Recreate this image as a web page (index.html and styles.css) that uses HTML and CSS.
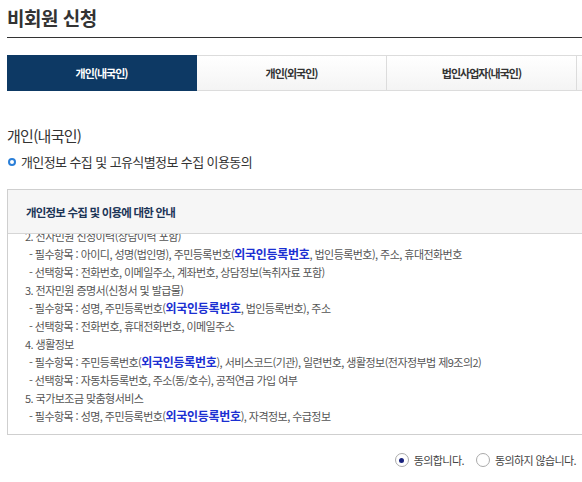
FILE: index.html
```html
<!DOCTYPE html>
<html lang="ko">
<head>
<meta charset="utf-8">
<title>비회원 신청</title>
<link rel="stylesheet" href="styles.css">
</head>
<body>
<div class="page">
  <h1 class="title">비회원 신청</h1>
  <div class="tabs">
    <div class="tab active">개인(내국인)</div>
    <div class="tab">개인(외국인)</div>
    <div class="tab">법인사업자(내국인)</div>
    <div class="tab"></div>
  </div>
  <h2 class="sub">개인(내국인)</h2>
  <h3 class="bullet"><span class="ring"></span>개인정보 수집 및 고유식별정보 수집 이용동의</h3>
  <div class="box">
    <div class="box-head">개인정보 수집 및 이용에 대한 안내</div>
    <div class="box-body">
      <ul class="lines">
        <li>2. 전자민원 신청이력(상담이력 포함)</li>
        <li class="dash">- 필수항목 : 아이디, 성명(법인명), 주민등록번호(<b>외국인등록번호</b>, 법인등록번호), 주소, 휴대전화번호</li>
        <li class="dash">- 선택항목 : 전화번호, 이메일주소, 계좌번호, 상담정보(녹취자료 포함)</li>
        <li>3. 전자민원 증명서(신청서 및 발급물)</li>
        <li class="dash">- 필수항목 : 성명, 주민등록번호(<b>외국인등록번호</b>, 법인등록번호), 주소</li>
        <li class="dash">- 선택항목 : 전화번호, 휴대전화번호, 이메일주소</li>
        <li>4. 생활정보</li>
        <li class="dash">- 필수항목 : 주민등록번호(<b>외국인등록번호</b>), 서비스코드(기관), 일련번호, 생활정보(전자정부법 제9조의2)</li>
        <li class="dash">- 선택항목 : 자동차등록번호, 주소(동/호수), 공적연금 가입 여부</li>
        <li>5. 국가보조금 맞춤형서비스</li>
        <li class="dash">- 필수항목 : 성명, 주민등록번호(<b>외국인등록번호</b>), 자격정보, 수급정보</li>
      </ul>
    </div>
  </div>
  <div class="agree">
    <label class="opt"><span class="radio on"></span>동의합니다.</label>
    <label class="opt"><span class="radio"></span>동의하지 않습니다.</label>
  </div>
</div>
</body>
</html>
```
FILE: styles.css
```css
html, body {
  margin: 0;
  padding: 0;
  background: #fff;
  overflow: hidden;
}
body {
  font-family: "Noto Sans CJK KR", "Noto Sans", sans-serif;
  color: #333;
}
.page {
  width: 575px;
  padding-left: 7px;
}
.title {
  margin: 0;
  padding-top: 4px;
  height: 33px;
  font-size: 19px;
  line-height: 28px;
  font-weight: 700;
  letter-spacing: -0.5px;
  color: #333;
  border-bottom: 1px solid #333;
}
.tabs {
  display: flex;
  margin-top: 17px;
  overflow: hidden;
}
.tab {
  flex: 0 0 189px;
  height: 34px;
  box-sizing: content-box;
  display: flex;
  align-items: center;
  justify-content: center;
  font-size: 11px;
  font-weight: 700;
  letter-spacing: -1px;
  color: #333;
  background: linear-gradient(#fff, #f4f4f4);
  border-top: 1px solid #dcdcdc;
  border-bottom: 1px solid #dcdcdc;
  border-right: 1px solid #dcdcdc;
  white-space: nowrap;
}
.tab.active {
  background: #0d3964;
  color: #fff;
  border-color: #0d3964;
}
.sub {
  margin: 35px 0 0;
  font-size: 15px;
  line-height: 20px;
  font-weight: 400;
  letter-spacing: -0.7px;
  color: #333;
}
.bullet {
  margin: 6px 0 0;
  display: flex;
  align-items: center;
  font-size: 13px;
  line-height: 20px;
  font-weight: 400;
  letter-spacing: -0.6px;
  color: #333;
}
.ring {
  width: 4px;
  height: 4px;
  border: 2px solid #2b7fd8;
  border-radius: 50%;
  margin: 0 5px 0 1px;
}
.box {
  margin-top: 17px;
  border: 1px solid #cfcfcf;
  border-right: 0;
}
.box-head {
  height: 43px;
  background: #f6f6f6;
  border-bottom: 1px solid #d6d6d6;
  display: flex;
  align-items: center;
  padding-left: 18px;
  font-size: 11.5px;
  font-weight: 700;
  letter-spacing: -0.8px;
  color: #1c3557;
}
.box-body {
  height: 200px;
  overflow: hidden;
  display: flex;
  flex-direction: column;
  justify-content: flex-end;
}
.lines {
  list-style: none;
  margin: 0;
  padding: 0 0 9px 17px;
  flex-shrink: 0;
}
.lines li {
  font-size: 11px;
  line-height: 18px;
  letter-spacing: -0.55px;
  color: #555;
  white-space: nowrap;
}
.lines li.dash {
  padding-left: 4px;
}
.lines b {
  color: #1b2fd2;
  font-weight: 700;
  font-size: 12px;
  letter-spacing: -0.3px;
}
.agree {
  display: flex;
  justify-content: flex-end;
  align-items: center;
  gap: 12px;
  margin-top: 17px;
  padding-right: 6px;
}
.opt {
  display: flex;
  align-items: center;
  font-size: 11px;
  letter-spacing: -0.6px;
  color: #444;
  white-space: nowrap;
}
.radio {
  width: 14px;
  height: 14px;
  border: 1px solid #aaa;
  border-radius: 50%;
  margin-right: 5px;
  box-sizing: border-box;
  position: relative;
  background: #fff;
}
.radio.on::after {
  content: "";
  position: absolute;
  left: 3.5px;
  top: 3.5px;
  width: 5px;
  height: 5px;
  border-radius: 50%;
  background: #1a237e;
}
```
